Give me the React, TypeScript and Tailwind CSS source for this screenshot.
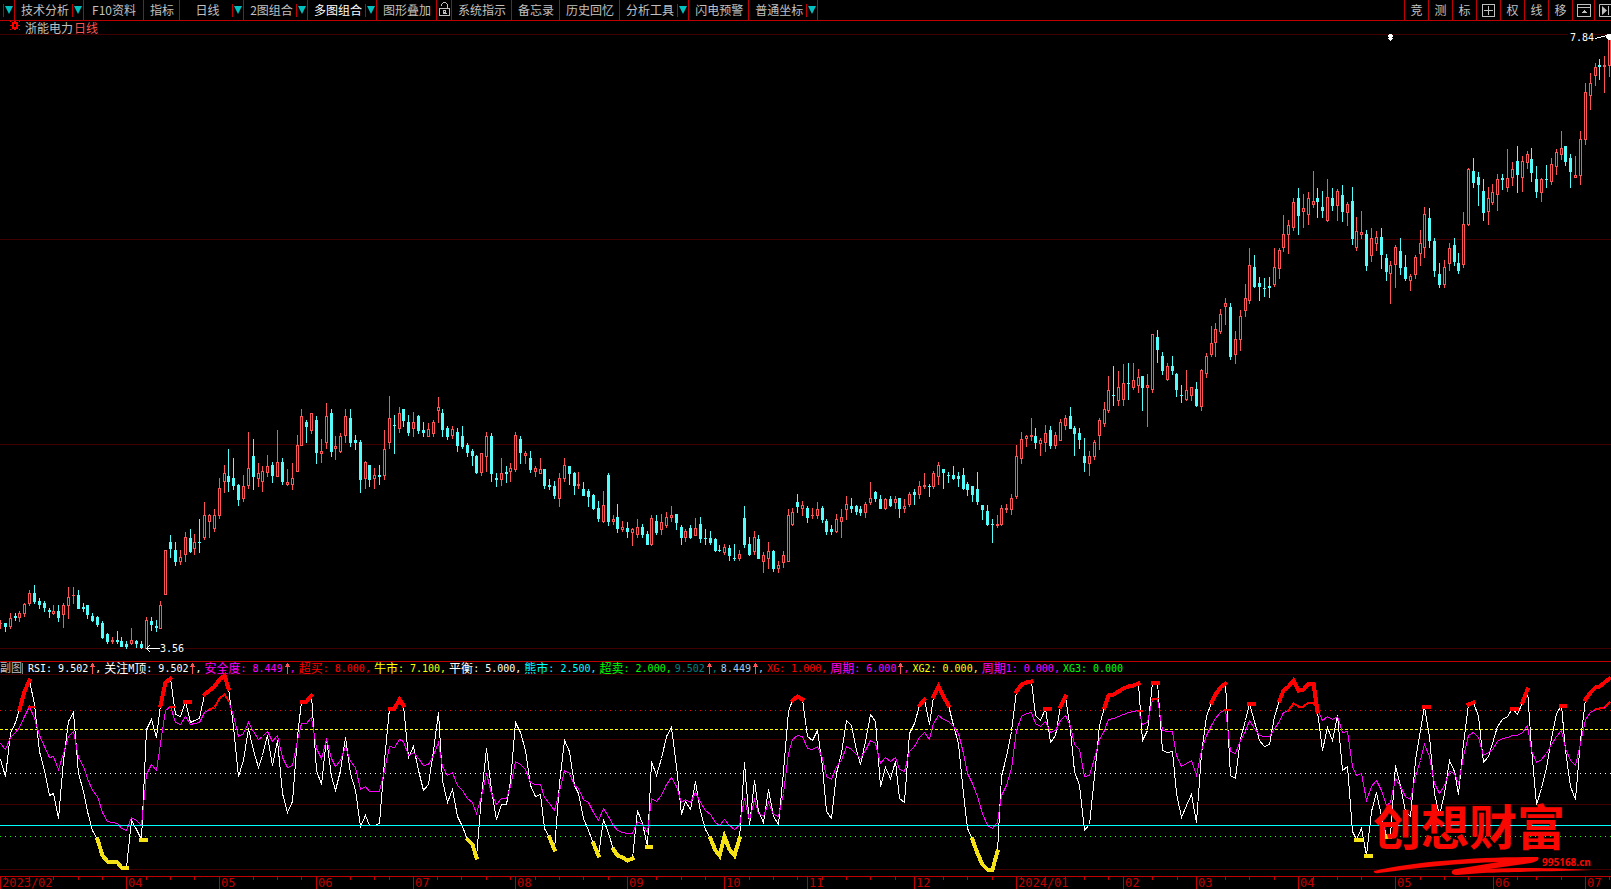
import type { ReactNode } from 'react';

const WIDTH = 1611;

// direction, high, body top, body bottom, low
const candleData = `
u 620 623 624 629;d 623 623 627 632;u 613 618 627 629;d 613 616 618 621;u 611 613 618 622;
u 603 604 614 617;u 590 593 604 606;d 585 593 602 604;d 598 601 605 609;d 601 603 608 612;
d 608 610 612 618;u 605 611 614 615;d 605 611 618 622;u 603 605 615 628;u 587 597 606 619;
u 587 595 596 604;d 590 595 609 609;d 603 607 609 612;d 605 605 615 619;d 613 616 621 622;
d 616 617 625 627;d 621 623 638 639;d 633 634 642 644;u 637 640 642 644;d 631 640 642 644;
d 637 641 647 647;d 641 644 647 649;u 628 640 644 645;d 640 641 644 648;d 641 644 648 649;
u 617 620 649 649;d 617 621 625 631;d 620 626 628 632;u 601 605 629 629;u 550 550 595 595;
d 535 542 549 558;d 542 550 562 566;u 550 557 562 565;u 532 537 555 562;d 529 538 552 553;
u 534 542 549 555;d 519 542 543 553;u 502 515 538 540;u 514 515 522 538;u 509 515 529 532;
u 478 488 516 519;u 465 473 482 493;d 449 476 482 492;d 458 478 486 490;d 484 485 500 506;
u 475 486 499 502;u 432 468 486 489;d 439 456 477 490;u 463 473 479 487;u 466 471 482 492;
u 455 466 473 477;d 462 465 476 483;u 430 462 477 477;d 458 462 482 485;u 469 482 485 486;
u 463 478 485 490;u 435 445 472 472;u 409 416 446 446;d 420 422 427 443;u 413 413 431 434;
d 416 420 453 464;u 439 451 454 463;u 403 416 443 449;d 409 413 452 457;u 436 446 449 460;
u 433 436 452 453;u 409 416 436 443;d 409 418 443 447;d 435 440 443 450;d 440 442 480 493;
u 461 462 479 489;d 465 465 480 487;u 468 475 479 489;d 465 475 477 485;u 430 449 476 480;
u 396 418 443 449;d 415 425 426 454;u 407 413 429 433;d 409 409 421 427;d 415 422 433 436;
u 412 422 429 437;d 415 416 431 434;d 422 430 433 437;u 423 429 437 437;u 420 422 434 437;
u 397 407 411 423;d 409 413 430 437;d 426 428 437 440;u 426 429 436 439;d 428 432 446 452;
d 426 436 447 449;d 443 445 453 457;d 449 451 456 466;d 455 456 473 474;u 453 453 473 476;
u 432 436 457 472;d 433 436 474 482;d 473 478 480 487;u 458 473 480 486;d 466 472 474 483;
u 463 468 472 482;u 432 435 470 472;d 436 439 453 464;u 451 453 456 464;d 451 458 470 473;
u 466 468 472 477;u 458 469 474 474;d 469 469 486 489;d 479 485 487 490;d 481 486 496 499;
u 473 478 499 507;u 458 465 479 482;d 466 466 474 485;d 472 473 486 495;u 472 484 486 489;
d 482 489 496 496;d 489 491 497 507;d 494 495 509 510;d 501 508 519 522;u 491 505 522 523;
d 473 475 522 526;u 515 519 522 525;d 504 517 529 533;u 521 527 530 532;d 522 528 532 538;
u 528 529 533 546;u 519 527 535 538;d 524 527 535 538;d 531 534 545 545;u 515 518 545 546;
d 515 521 533 535;u 514 522 530 535;u 512 517 526 528;u 506 515 518 522;d 514 514 523 530;
d 525 527 538 545;u 529 531 538 542;d 525 528 538 539;u 518 528 536 536;d 517 524 539 543;
d 529 538 539 545;d 531 538 543 545;d 538 539 551 552;d 545 550 551 552;u 544 547 553 555;
d 545 548 556 561;d 544 558 559 561;u 550 554 559 561;d 506 518 545 548;d 537 544 555 556;
u 531 537 552 555;d 535 539 559 559;u 552 555 562 573;u 542 551 559 569;d 550 551 569 572;
u 561 565 569 573;u 551 555 563 568;u 509 515 562 562;u 508 512 525 526;d 494 502 507 513;
u 501 505 509 516;d 506 508 518 523;u 508 515 516 519;u 502 509 516 519;d 506 508 520 523;
d 519 521 532 535;d 525 529 532 535;u 514 519 532 533;u 509 517 522 538;u 496 504 510 520;
d 498 506 509 513;d 505 506 512 515;d 506 509 513 516;u 502 504 513 518;u 482 498 503 505;
d 491 492 499 502;d 495 499 509 509;u 498 499 509 510;d 496 499 506 507;u 496 499 503 509;
d 498 498 509 518;u 499 506 509 513;u 492 494 505 507;d 489 492 495 505;u 481 486 495 499;
u 473 485 487 489;d 484 486 487 497;u 471 473 487 489;u 462 465 477 485;d 469 469 473 489;
d 472 475 476 483;d 466 475 479 480;d 472 476 479 487;d 468 475 489 490;d 482 484 490 496;
d 486 486 495 502;d 472 489 502 505;d 505 505 510 520;d 505 511 525 526;d 519 524 525 543;
u 515 524 526 528;u 505 508 525 526;u 504 508 510 513;u 494 498 510 515;u 445 456 497 499;
u 432 439 459 464;u 435 436 439 447;u 418 435 437 441;d 428 436 443 449;u 438 440 444 456;
u 425 433 443 452;d 426 430 446 449;u 432 435 446 449;u 419 422 441 441;u 415 418 426 430;
d 407 416 429 429;d 426 428 434 456;d 428 433 440 449;d 438 456 463 472;u 451 456 464 476;
u 440 442 457 460;u 418 420 436 450;u 402 409 424 427;u 376 390 411 413;d 366 395 396 406;
u 371 387 401 406;u 364 383 400 406;d 363 383 384 400;u 363 380 388 390;u 369 377 386 393;
d 376 376 388 411;u 374 385 388 427;u 334 334 390 393;d 330 337 350 363;d 352 356 371 375;
u 363 366 380 381;d 356 366 371 375;d 373 374 390 397;d 385 395 396 403;u 370 390 400 401;
u 387 387 396 401;d 382 389 406 407;u 369 370 407 411;u 353 356 374 378;u 326 343 355 357;
u 323 329 343 357;u 309 314 332 334;u 298 303 307 325;d 303 307 357 360;u 331 339 355 364;
u 310 316 340 351;u 284 298 311 317;u 248 265 301 304;d 255 267 287 288;d 277 283 287 301;
d 278 288 289 297;d 277 286 288 298;u 248 267 285 287;u 248 250 269 279;u 215 234 248 252;
u 220 225 235 254;u 198 202 228 231;d 188 198 216 235;u 194 208 212 228;u 192 198 215 225;
u 171 201 205 208;d 188 198 202 218;d 191 207 211 218;u 179 197 221 222;d 188 198 206 211;
u 189 191 206 221;d 185 195 212 222;u 202 204 213 226;d 187 201 239 245;u 217 231 248 251;
u 211 232 235 239;d 230 234 266 271;u 228 238 256 262;u 231 237 244 251;d 228 237 255 269;
d 254 258 272 281;u 261 265 274 304;u 245 247 265 288;d 238 251 268 275;d 255 267 279 281;
u 274 276 281 291;u 255 257 275 279;u 230 243 254 266;u 207 214 248 258;d 208 218 241 248;
d 238 241 271 277;d 263 274 285 288;u 260 267 285 288;u 243 248 264 271;d 238 245 262 266;
d 253 263 271 274;u 212 224 265 268;u 168 169 225 226;d 158 171 183 188;d 172 177 185 206;
d 179 191 213 221;u 187 198 212 225;u 184 192 203 205;u 174 179 195 211;d 174 178 180 190;
u 149 178 188 192;u 162 169 178 186;d 146 161 175 193;u 156 161 178 192;u 151 154 163 169;
d 148 159 173 182;d 166 179 192 198;u 178 179 193 202;d 165 179 180 188;u 158 164 182 185;
u 149 152 167 175;u 131 148 155 160;d 146 146 162 166;d 154 158 172 188;u 156 175 178 178;
u 131 139 176 185;u 83 92 140 145;u 73 83 96 110;u 63 67 76 86;d 59 65 67 80;
u 56 65 67 93;u 36 38 66 77`;

const candles = candleData
  .trim()
  .split(';')
  .map((entry) => {
    const [dir, ...levels] = entry.trim().split(' ');
    const [high, top, bottom, low] = levels.map(Number);
    return { up: dir === 'u', high, top, bottom, low };
  });

// depth below the top of the pane, three steps per pixel
const rsi = [
  267, 320, 190, 157, 118, 65, 32, 104, 245, 300, 375, 371, 444, 270, 155, 127, 310, 365, 425, 480,
  508, 555, 573, 574, 577, 591, 592, 450, 478, 508, 178, 147, 202, 105, 38, 26, 132, 139, 95, 156,
  151, 144, 73, 60, 50, 28, 15, 55, 170, 320, 270, 175, 240, 291, 255, 195, 286, 210, 370, 428,
  395, 200, 94, 93, 75, 300, 343, 205, 318, 362, 300, 203, 310, 360, 468, 437, 466, 466, 460, 270,
  116, 115, 88, 105, 262, 230, 300, 361, 343, 240, 127, 330, 398, 358, 440, 470, 508, 522, 562, 380,
  236, 360, 447, 404, 403, 335, 157, 187, 240, 345, 380, 374, 475, 503, 538, 340, 211, 245, 345, 370,
  445, 480, 520, 557, 447, 490, 538, 555, 562, 571, 566, 422, 460, 530, 275, 317, 265, 200, 173, 290,
  432, 395, 418, 335, 425, 478, 505, 540, 556, 498, 537, 555, 505, 277, 465, 330, 425, 457, 358, 440,
  463, 305, 125, 92, 79, 87, 200, 211, 180, 290, 425, 444, 310, 250, 152, 167, 240, 282, 215, 133,
  155, 350, 292, 324, 275, 386, 397, 190, 160, 107, 88, 163, 80, 50, 80, 105, 165, 220, 370, 475,
  508, 550, 582, 597, 597, 545, 320, 260, 185, 65, 43, 38, 35, 135, 151, 115, 217, 195, 110, 80,
  180, 305, 345, 482, 463, 320, 165, 112, 77, 74, 65, 56, 48, 45, 41, 212, 180, 36, 36, 240,
  246, 243, 370, 442, 405, 373, 457, 250, 140, 97, 73, 52, 41, 317, 325, 205, 150, 99, 155, 210,
  230, 222, 140, 92, 60, 48, 30, 60, 59, 41, 41, 125, 241, 172, 211, 137, 300, 290, 485, 508,
  475, 555, 425, 368, 440, 500, 495, 285, 350, 425, 438, 270, 180, 108, 200, 370, 437, 370, 272, 305,
  373, 220, 103, 96, 140, 277, 258, 220, 168, 147, 140, 114, 133, 97, 58, 235, 403, 355, 295, 205,
  130, 106, 240, 350, 387, 210, 88, 66, 52, 48, 36, 26,
];

const safety = [
  219, 237, 203, 188, 172, 140, 108, 145, 195, 228, 262, 259, 298, 250, 200, 185, 262, 290, 325, 360,
  380, 428, 455, 458, 460, 476, 481, 443, 450, 465, 312, 283, 300, 220, 122, 108, 158, 163, 138, 162,
  160, 156, 126, 119, 113, 85, 72, 90, 135, 198, 190, 158, 185, 207, 199, 185, 214, 195, 262, 292,
  285, 210, 160, 160, 143, 235, 265, 208, 265, 290, 272, 230, 275, 293, 357, 349, 364, 364, 363, 300,
  230, 232, 208, 213, 255, 248, 265, 286, 283, 255, 217, 290, 315, 308, 345, 360, 385, 396, 430, 380,
  310, 370, 403, 385, 385, 350, 275, 283, 297, 337, 343, 343, 383, 400, 420, 365, 302, 311, 345, 354,
  387, 398, 427, 451, 415, 438, 467, 481, 486, 491, 490, 455, 464, 487, 384, 393, 375, 342, 322, 348,
  397, 387, 396, 368, 398, 420, 432, 458, 466, 448, 466, 477, 466, 385, 452, 387, 430, 440, 398, 433,
  440, 370, 250, 208, 196, 200, 235, 238, 228, 265, 318, 327, 290, 270, 230, 237, 252, 265, 240, 212,
  220, 280, 262, 273, 263, 298, 304, 245, 230, 203, 188, 207, 160, 137, 147, 155, 170, 190, 250, 310,
  340, 380, 430, 465, 475, 458, 375, 345, 295, 180, 138, 130, 127, 160, 168, 155, 188, 182, 150, 137,
  170, 222, 237, 320, 315, 265, 208, 180, 148, 144, 138, 132, 127, 123, 122, 163, 157, 87, 85, 180,
  183, 184, 255, 289, 280, 271, 317, 240, 195, 165, 145, 127, 117, 243, 250, 210, 185, 150, 175, 195,
  200, 200, 175, 153, 128, 120, 101, 110, 110, 98, 98, 118, 150, 140, 147, 138, 187, 184, 290, 316,
  311, 392, 350, 332, 362, 405, 398, 325, 348, 380, 388, 320, 270, 223, 260, 340, 370, 345, 303, 310,
  340, 260, 195, 187, 203, 255, 248, 238, 214, 205, 202, 195, 195, 187, 165, 240, 278, 268, 250, 222,
  198, 182, 235, 270, 285, 220, 148, 128, 118, 115, 113, 96,
];

// first and last bar of each highlighted run
const rsiTops = [
  [4, 6], [33, 35], [38, 38], [42, 47], [62, 64], [80, 83], [163, 165], [189, 190], [192, 195],
  [209, 212], [215, 215], [218, 219], [227, 234], [237, 238], [249, 252], [257, 257], [263, 271],
  [293, 293], [302, 303], [311, 311], [313, 314], [321, 321], [326, 331],
];
const safetyTops = [[6, 6], [35, 35], [43, 47], [234, 234], [237, 238], [252, 252], [265, 271], [328, 331]];
const rsiLows = [
  [20, 26], [29, 29], [96, 98], [113, 114], [122, 123], [126, 130], [133, 133], [146, 152],
  [200, 205], [279, 279], [281, 281], [285, 285],
];

const months = [
  { x: 0, label: '2023/02' },
  { x: 126, label: '04' },
  { x: 219, label: '05' },
  { x: 316, label: '06' },
  { x: 413, label: '07' },
  { x: 515, label: '08' },
  { x: 627, label: '09' },
  { x: 724, label: '10' },
  { x: 807, label: '11' },
  { x: 914, label: '12' },
  { x: 1016, label: '2024/01' },
  { x: 1123, label: '02' },
  { x: 1196, label: '03' },
  { x: 1298, label: '04' },
  { x: 1395, label: '05' },
  { x: 1493, label: '06' },
  { x: 1585, label: '07' },
];

const weekTicks = [
  5, 29, 53, 78, 102, 146, 170, 194, 253, 277, 301, 350, 374, 389, 437, 461, 486, 510, 535, 559, 583,
  608, 656, 681, 705, 749, 773, 797, 822, 846, 870, 895, 943, 967, 992, 1021, 1045, 1065, 1084, 1108,
  1152, 1177, 1225, 1249, 1274, 1313, 1337, 1361, 1420, 1444, 1468, 1517, 1536, 1561, 1609,
];

const barX = (index: number) => Math.floor(index * 4.8617 + 0.45);
const paneY = (depth: number) => 670 + Math.floor(depth / 3);

const linePoints = (values: number[]) => values.map((v, i) => `${barX(i) + 0.5},${paneY(v) + 0.5}`).join(' ');

function runPoints(values: number[], [from, to]: number[]) {
  if (from === to) {
    return `${barX(from)},${paneY(values[from]) + 0.5} ${barX(from + 1)},${paneY(values[from]) + 0.5}`;
  }
  return values
    .slice(from, to + 1)
    .map((v, i) => `${barX(from + i) + 0.5},${paneY(v) + 0.5}`)
    .join(' ');
}

function DropArrow() {
  return (
    <span className="flex h-[13px] w-[11px] items-start justify-center border-l border-[#c00000] pt-0.5">
      <svg width="8" height="8" viewBox="0 0 8 8" aria-hidden="true">
        <path d="M0 0H8L4 8Z" fill="#00c0c0" />
      </svg>
    </span>
  );
}

type ToolItem = { label: string; className?: string; menu?: boolean };

const toolItems: ToolItem[] = [
  { label: '技术分析', menu: true },
  { label: 'F10资料', className: 'w-[60px]' },
  { label: '指标' },
  { label: '日线', className: 'w-16', menu: true },
  { label: '2图组合', className: 'w-16', menu: true },
  { label: '多图组合', className: 'text-white', menu: true },
  { label: '图形叠加' },
];

const moreToolItems: ToolItem[] = [
  { label: '系统指示' },
  { label: '备忘录' },
  { label: '历史回忆' },
  { label: '分析工具', menu: true },
  { label: '闪电预警' },
  { label: '普通坐标', menu: true },
];

function ToolButton({ label, className = '', menu }: ToolItem) {
  return (
    <button type="button" className={`flex h-full shrink-0 items-center border-r border-[#c00000] ${className}`}>
      <span className={`flex-1 whitespace-nowrap pl-1.5 text-center ${menu ? 'pr-[3px]' : 'pr-[5px]'}`}>{label}</span>
      {menu && <DropArrow />}
    </button>
  );
}

function SideButton({ label, className = 'w-6', children }: { label: string; className?: string; children?: ReactNode }) {
  return (
    <button
      type="button"
      aria-label={label}
      className={`flex h-full items-center justify-center border-l border-[#c00000] ${className}`}
    >
      {children ?? label}
    </button>
  );
}

function Toolbar() {
  return (
    <header className="flex h-[21px] shrink-0 items-stretch justify-between overflow-hidden border-b border-[#c00000]">
      <nav className="flex">
        <button type="button" aria-label="菜单" className="flex w-[15px] items-center justify-end border-r border-[#c00000]">
          <DropArrow />
        </button>
        {toolItems.map((item) => (
          <ToolButton key={item.label} {...item} />
        ))}
        <button type="button" aria-label="锁定" className="flex w-[15px] items-start justify-center border-r border-[#c00000] pt-0.5">
          <svg width="11" height="14" viewBox="0 0 11 14" fill="none" stroke="#c0c0c0" shapeRendering="crispEdges">
            <path d="M0.5 6.5H10.5V13.5H0.5ZM2.5 3.5V2.5L4.5 0.5H6.5L8.5 2.5V6.5M4.5 8.5H6.5V10.5H4.5ZM3.5 11.5H7.5" />
          </svg>
        </button>
        {moreToolItems.map((item) => (
          <ToolButton key={item.label} {...item} />
        ))}
      </nav>
      <div className="flex">
        <SideButton label="竞" />
        <SideButton label="测" />
        <SideButton label="标" />
        <SideButton label="加窗">
          <svg width="13" height="13" viewBox="0 0 13 13" fill="none" stroke="#c0c0c0" shapeRendering="crispEdges">
            <path d="M0.5 0.5H12.5V12.5H0.5ZM6.5 2V11M2 6.5H11" />
          </svg>
        </SideButton>
        <SideButton label="权" />
        <SideButton label="线" />
        <SideButton label="移" />
        <SideButton label="展开" className="w-[22px]">
          <svg width="14" height="13" viewBox="0 0 14 13" fill="none" stroke="#c0c0c0" shapeRendering="crispEdges">
            <path d="M0.5 0.5H13.5V12.5H0.5ZM0.5 3.5H13.5" />
            <path d="M4 9H10L7 6Z" fill="#c0c0c0" stroke="none" />
          </svg>
        </SideButton>
        <SideButton label="下一个" className="w-[17px] overflow-hidden pl-[5px]">
          <svg className="shrink-0" width="13" height="13" viewBox="0 0 13 13" fill="none" stroke="#c0c0c0">
            <path d="M0.5 0.5H12.5V12.5H0.5ZM9.5 2V11" />
            <path d="M3 2V11L8 6.5Z" fill="#c0c0c0" stroke="none" />
          </svg>
        </SideButton>
      </div>
    </header>
  );
}

function Candle({ index }: { index: number }) {
  const { up, high, top, bottom, low } = candles[index];
  const x = barX(index);
  if (!up) {
    return <path d={`M${x} ${high}h1V${low}h-1ZM${x - 1} ${top}h3V${bottom}h-3Z`} fill="#54fcfc" />;
  }
  return (
    <g fill="#fc5454">
      <path d={`M${x} ${high}h1V${top}h-1ZM${x} ${bottom}h1V${low}h-1Z`} />
      {bottom - top > 2 ? (
        <path
          fillRule="evenodd"
          d={`M${x - 1} ${top}h3V${bottom}h-3ZM${x} ${top + 1}h1V${bottom - 1}h-1Z`}
        />
      ) : (
        <rect x={x - 1} y={top} width="3" height={bottom - top} />
      )}
    </g>
  );
}

function PriceChart() {
  return (
    <section className="flex min-h-0 flex-1 flex-col">
      <h1 className="flex h-[13px] shrink-0 items-center gap-px pl-2.5 text-xs leading-[13px]">
        <svg className="mr-1 h-2.5 w-2.5 self-start" viewBox="0 0 10 10" shapeRendering="crispEdges" aria-hidden="true">
          <path d="M2 1h6v7h-6ZM0 0h1v1h-1ZM9 0h1v1h-1ZM0 8h1v1h-1ZM9 8h1v1h-1ZM4 0h2v9h-2ZM0 4h10v1h-10Z" fill="#f00" />
          <path d="M4 3h2v3h-2Z" fill="#000" />
        </svg>
        <span>浙能电力</span>
        <span className="text-[#fc5454]">日线</span>
      </h1>
      <div className="relative min-h-0 flex-1">
        <svg
          className="absolute inset-0 h-full w-full"
          viewBox={`0 34 ${WIDTH} 627`}
          preserveAspectRatio="none"
          shapeRendering="crispEdges"
          role="img"
          aria-label="浙能电力日线"
        >
          {[34, 239, 444, 648].map((y) => (
            <rect key={y} x="0" y={y} width={WIDTH} height="1" fill="#400000" />
          ))}
          {candles.map((_, index) => (
            <Candle key={index} index={index} />
          ))}
          <path d="M146.5 648.5H160M150 645L146.5 648.5L150 652M1595 38.5L1607 35.5" stroke="#fff" fill="none" />
          <path
            d="M1390 33h1v1h1v1h1v2h-1v1h1v1h-1v1h-1v1h-1v-1h-1v-1h-1v-1h1v-1h-1v-2h1v-1h1Z"
            fill="#fff"
          />
          <path d="M1607 33h1v1h3v6h-3v-1h-1v-1h-1v-3h1Z" fill="#fff" />
        </svg>
        <span className="absolute bottom-1 left-40 bg-black font-['DejaVu_Sans_Mono',monospace] text-[10px] leading-4 text-white">
          3.56
        </span>
        <span className="absolute right-[17px] top-[-4px] bg-black pl-0.5 font-['DejaVu_Sans_Mono',monospace] text-[10px] leading-4 text-white">
          7.84
        </span>
      </div>
    </section>
  );
}

const readouts = [
  { name: 'RSI', value: '9.502', color: 'text-white', rising: true },
  { name: '关注M顶', value: '9.502', color: 'text-white', rising: true },
  { name: '安全度', value: '8.449', color: 'text-[#ff00ff]', rising: true },
  { name: '超买', value: '8.000', color: 'text-[#ff0000]' },
  { name: '牛市', value: '7.100', color: 'text-[#ffff00]' },
  { name: '平衡', value: '5.000', color: 'text-white' },
  { name: '熊市', value: '2.500', color: 'text-[#00ffff]' },
  { name: '超卖', value: '2.000', color: 'text-[#00ff00]' },
  { name: '', value: '9.502', color: 'text-[#008080]', rising: true },
  { name: '', value: '8.449', color: 'text-[#a6caf0]', rising: true },
  { name: 'XG', value: '1.000', color: 'text-[#ff0000]' },
  { name: '周期', value: '6.000', color: 'text-[#ff00ff]', rising: true },
  { name: 'XG2', value: '0.000', color: 'text-[#ffff00]' },
  { name: '周期1', value: '0.000', color: 'text-[#ff00ff]' },
  { name: 'XG3', value: '0.000', color: 'text-[#00ff00]' },
];

// Chinese runs are set at 12px beside 10px digits
function MixedText({ text }: { text: string }) {
  return (
    <>
      {(text.match(/[\u4e00-\u9fff]+|[^\u4e00-\u9fff]+/g) ?? []).map((part) => (
        <span key={part} className={/[\u4e00-\u9fff]/.test(part) ? 'text-xs leading-3' : ''}>
          {part}
        </span>
      ))}
    </>
  );
}

function Legend() {
  return (
    <div className="flex h-3 shrink-0 items-center gap-[3px] whitespace-pre pt-px font-['DejaVu_Sans_Mono','Noto_Sans_CJK_SC',monospace] text-[10px] leading-3">
      <button type="button" className="mr-0.5 h-3 w-[23px] border-r border-[#808080] text-left text-[11px] leading-3 text-[#c0c0c0]">
        副图
      </button>
      {readouts.map(({ name, value, color, rising }, index) => (
        <span key={index} className={`flex items-center ${color}`}>
          {name && <MixedText text={`${name}: `} />}
          {value}
          {rising && (
            <svg className="ml-0.5" width="5" height="11" viewBox="0 0 5 11" shapeRendering="crispEdges" aria-hidden="true">
              <path d="M2 0h1v1h1v2h1v1h-2v7h-1v-7h-2v-1h1v-2h1Z" fill="#fc5454" />
            </svg>
          )}
          {index < readouts.length - 1 && ','}
        </span>
      ))}
    </div>
  );
}

function Runs({ values, runs, color, width }: { values: number[]; runs: number[][]; color: string; width: number }) {
  return (
    <g fill="none" stroke={color} strokeWidth={width} strokeLinecap="square">
      {runs.map((run) => (
        <polyline key={run[0]} points={runPoints(values, run)} />
      ))}
    </g>
  );
}

function Watermark() {
  return (
    <div className="pointer-events-none absolute bottom-[13px] right-4 flex w-[224px] flex-col text-[#f80800]">
      <span className="pl-0.5 text-5xl font-bold leading-[64px]">创想财富</span>
      <div className="relative h-5">
        <svg className="absolute inset-0" width="224" height="20" viewBox="0 5 224 20" fill="#f80800" aria-hidden="true">
          <path d="M3 20C45 10 110 6 167 6C169 8 166 11 160 12L118 18C150 16 190 17 221 19C190 20 140 21 112 22L86 24C79 24 79 19 85 18L128 11C90 12 45 17 8 22C4 23 2 21 3 20Z" />
        </svg>
        <span className="absolute left-[171px] top-0 font-['Noto_Sans',sans-serif] text-[10px] font-bold leading-3">
          995168.cn
        </span>
      </div>
    </div>
  );
}

function IndicatorPane() {
  return (
    <section className="relative flex shrink-0 flex-col overflow-hidden border-t border-[#c00000]">
      <Legend />
      <svg
        className="block h-[202px] w-full overflow-visible"
        viewBox={`0 674 ${WIDTH} 202`}
        preserveAspectRatio="none"
        shapeRendering="crispEdges"
        role="img"
        aria-label="RSI"
      >
        {[674, 739, 804, 869].map((y) => (
          <rect key={y} x="0" y={y} width={WIDTH} height="1" fill="#400000" />
        ))}
        <path d={`M0 710.5H${WIDTH}`} stroke="#f00" strokeDasharray="1 4" />
        <path d={`M0 729.5H${WIDTH}`} stroke="#ff0" strokeDasharray="3 2" />
        <path d={`M0 773.5H${WIDTH}`} stroke="#fff" strokeDasharray="1 4" />
        <path d={`M0 836.5H${WIDTH}`} stroke="#0f0" strokeDasharray="1 4" />
        <polyline points={linePoints(rsi)} fill="none" stroke="#fff" />
        <polyline points={linePoints(safety)} fill="none" stroke="#f0f" />
        <path d={`M0 825.5H${WIDTH}`} stroke="#0ff" />
        <Runs values={safety} runs={safetyTops} color="#f00" width={2} />
        <Runs values={rsi} runs={rsiTops} color="#f00" width={4} />
        <Runs values={rsi} runs={rsiLows} color="#f5e216" width={4} />
      </svg>
      <div className="relative h-[13px] border-t border-[#c00000] font-['DejaVu_Sans_Mono',monospace] text-xs leading-3 text-[#c00000]">
        {weekTicks.map((x) => (
          <i key={x} className="absolute top-0 h-[3px] w-px bg-[#c00000]" style={{ left: `${(x / WIDTH) * 100}%` }} />
        ))}
        {months.map(({ x, label }) => (
          <span
            key={x}
            className="absolute top-0 h-3 border-l border-[#c00000] pl-px"
            style={{ left: `${(x / WIDTH) * 100}%` }}
          >
            {label}
          </span>
        ))}
      </div>
      <Watermark />
    </section>
  );
}

export default function App() {
  return (
    <main className="flex h-screen min-h-[480px] flex-col overflow-hidden bg-black font-['Noto_Sans_CJK_SC',sans-serif] text-xs text-[#c0c0c0]">
      <Toolbar />
      <PriceChart />
      <IndicatorPane />
    </main>
  );
}
